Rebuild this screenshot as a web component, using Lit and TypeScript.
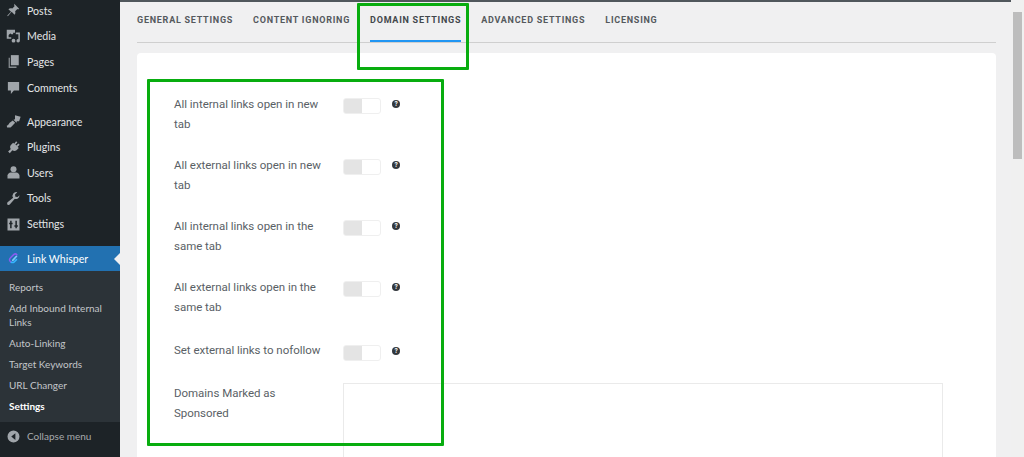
import { LitElement, html, css, svg } from "lit";
import { customElement } from "lit/decorators.js";

const icons: Record<string, unknown> = {
  pin: svg`<path d="M11 1l6.500 6.500-1.300 1-1-.4-3 3c.6 2 .3 3.600-.8 4.700L7.500 11.800 2.500 17.500l-.8-.8 5-5-3.500-3.500C4.300 6.900 6.400 6.600 8.400 7.200l3-3-.4-1z"/>`,
  media: svg`<path d="M1 1h11v4H9.500V7H7L6 5.500 3.500 8v3H7v2H1z"/><circle cx="6" cy="4.500" r="1.300"/><path d="M13 4.500h5.500v11.200a2.300 2.300 0 1 1-2-2.200V7H13z"/><circle cx="10" cy="15.500" r="2.500"/>`,
  pages: svg`<path d="M6.500 1.500H17V15H6.500z"/><path d="M3.500 5H5.200v11.500H14V18.500H3.500z" opacity=".8"/>`,
  comments: svg`<path d="M2.500 2.500h15v11.500h-7L6.500 18.500V14h-4z"/>`,
  brush: svg`<path d="M12 1.500l7.500 2-2 6L14.500 9.500l-.5 2-4-4 2-.5z"/><path d="M9 8.500l3.200 3.200-3.700 3.800L6 18H1.500L1 15.500c2-.5 3-2 3.500-3.500z"/>`,
  plug: svg`<path d="M13.500 1.500l1.700 1.700L12.500 6 13.800 7.300 16.500 4.500l1.700 1.700L15.500 9l1.500 1.500-3 3c-1.800 1.400-3.800 1.300-5.500 0L5 17.500 2.800 15.300l3.700-3.300c-1.300-1.700-1.400-3.700 0-5.500l3-3L11 5z"/>`,
  user: svg`<circle cx="10" cy="5.500" r="4"/><path d="M2 18v-4c0-2 2.500-4 4-4h8c1.500 0 4 2 4 4v4z"/>`,
  wrench: svg`<path d="M18 6a5 5 0 0 1-6.500 4.500L5 18c-1.200 1.200-3.500.6-3.500-1.500 0-.5.200-1 .6-1.500L9.500 9A5 5 0 0 1 15 1.500L12 4.500l.5 3 3 .5 2.500-2.500z"/>`,
  sliders: svg`<path fill-rule="evenodd" d="M2 2h16v16H2zM5.500 5v2.500H4.200v2h1.300V15h2V9.500h1.300v-2H7.500V5zM12.500 5v6h-1.300v2h1.300v2h2v-2h1.300v-2h-1.300V5z"/>`,
};

const menu1 = [
  ["pin", "Posts"],
  ["media", "Media"],
  ["pages", "Pages"],
  ["comments", "Comments"],
];
const menu2 = [
  ["brush", "Appearance"],
  ["plug", "Plugins"],
  ["user", "Users"],
  ["wrench", "Tools"],
  ["sliders", "Settings"],
];
const subs = ["Reports", "Add Inbound Internal Links", "Auto-Linking", "Target Keywords", "URL Changer"];
const tabs = ["GENERAL SETTINGS", "CONTENT IGNORING", "DOMAIN SETTINGS", "ADVANCED SETTINGS", "LICENSING"];
const rows = [
  "All internal links open in new tab",
  "All external links open in new tab",
  "All internal links open in the same tab",
  "All external links open in the same tab",
  "Set external links to nofollow",
];

@customElement("app-root")
export class AppRoot extends LitElement {
  static styles = css`
    :host {
      display: block;
      width: 1024px;
      height: 457px;
      position: relative;
      overflow: hidden;
      background: #f0f0f1;
      font-family: "Lato", "Liberation Sans", sans-serif;
    }
    .layout {
      display: grid;
      grid-template-columns: 120px 1fr 13px;
      height: 457px;
    }
    .side {
      background: #1d2327;
      color: #e4e6e8;
      font-size: 10.600px;
      overflow: hidden;
      display: flex;
      flex-direction: column;
      margin-top: -2px;
      height: 459px;
    }
    .item {
      height: 25.600px;
      flex: none;
      display: flex;
      align-items: center;
      padding-left: 6px;
      gap: 6px;
    }
    .item svg {
      width: 15px;
      height: 15px;
      fill: #a0a5aa;
      flex: none;
    }
    .sep {
      height: 8.500px;
      flex: none;
    }
    .current {
      margin-top: 9.500px;
      background: #2271b1;
      color: #fff;
      position: relative;
      height: 25px;
    }
    .current::after {
      content: "";
      position: absolute;
      right: 0;
      top: 7px;
      border: 6px solid transparent;
      border-right-color: #f0f0f1;
      border-left: 0;
    }
    .sub {
      background: #2c3338;
      padding: 5.500px 0;
      color: #c3c6c9;
      font-size: 10px;
      flex: none;
    }
    .sub div {
      padding: 3.500px 8px 3.500px 9px;
      line-height: 14px;
    }
    .sub .on {
      color: #fff;
      font-weight: 700;
    }
    .collapse {
      color: #a7aaad;
      font-size: 10px;
      height: 28px;
    }
    .main {
      border-top: 2px solid #50575c;
      padding: 0 15px 0 17px;
      min-width: 0;
      overflow: hidden;
    }
    .tabs {
      display: flex;
      border-bottom: 1px solid #cfcfcf;
      height: 40px;
      gap: 20px;
      font-family: "Roboto", "Liberation Sans", sans-serif;
      font-weight: 700;
      font-size: 9px;
      letter-spacing: 0.750px;
      color: #55595d;
    }
    .tab {
      position: relative;
      padding-top: 12px;
      line-height: 12px;
      white-space: nowrap;
    }
    .tab.active {
      color: #42474c;
    }
    .tab.active::after {
      content: "";
      position: absolute;
      left: 0;
      right: 0;
      top: 38px;
      height: 2px;
      background: #2196f3;
    }
    .card {
      margin-top: 10px;
      background: #fff;
      border-radius: 4px;
      height: 420px;
      padding: 42px 0 0 37px;
      display: grid;
      grid-template-columns: 169px 600px;
      grid-auto-rows: min-content;
      color: #5a5f66;
      font-family: "Roboto", "Liberation Sans", sans-serif;
      font-size: 11.500px;
      letter-spacing: -0.030px;
      line-height: 19.500px;
    }
    .label {
      width: 153px;
      padding-bottom: 22px;
    }
    .label.last {
      padding-bottom: 24px;
    }
    .label.single {
      padding-bottom: 23.500px;
    }
    .ctl {
      display: flex;
      gap: 11px;
      align-items: flex-start;
      padding-top: 3px;
    }
    .ctl.single {
      padding-top: 4px;
    }
    .toggle {
      width: 36px;
      height: 14px;
      border: 1px solid #efefef;
      border-radius: 3px;
      background: linear-gradient(to right, #e4e4e4 50%, #fff 50%);
      display: block;
    }
    .help {
      width: 8px;
      height: 8px;
      border-radius: 50%;
      background: #33383d;
      color: #fff;
      font-size: 6.500px;
      font-weight: 700;
      line-height: 8px;
      text-align: center;
      letter-spacing: 0;
      margin-top: 2px;
    }
    .area {
      border: 1px solid #eaeaea;
      height: 120px;
      margin-top: -1px;
    }
    .scroll {
      background: #f0f0f0;
      padding: 12px 2px 0 2px;
    }
    .thumb {
      height: 147px;
      background: #bdbdbd;
    }
    .mark {
      position: absolute;
      border: 3px solid #08ad0f;
      border-radius: 1px;
      box-sizing: border-box;
      pointer-events: none;
    }
    .mark.tabmark {
      left: 357px;
      top: 3px;
      width: 112px;
      height: 67px;
    }
    .mark.rowmark {
      left: 147px;
      top: 79px;
      width: 297px;
      height: 367px;
    }
  `;

  private icon(name: string) {
    return html`<svg viewBox="0 0 20 20">${icons[name]}</svg>`;
  }

  render() {
    return html`
      <div class="layout">
        <nav class="side">
          ${menu1.map(([i, t]) => html`<div class="item">${this.icon(i)}<span>${t}</span></div>`)}
          <div class="sep"></div>
          ${menu2.map(([i, t]) => html`<div class="item">${this.icon(i)}<span>${t}</span></div>`)}
          <div class="item current">
            <svg viewBox="0 0 20 20" style="fill:none">
              <path d="M14 7l-5 5.500" stroke="#7ec8ff" stroke-width="2.200" stroke-linecap="round"/>
              <path d="M14.500 5a3 3 0 0 0-4-.5L6 9a3.500 3.500 0 0 0 1 6" stroke="#8a5cf0" stroke-width="2" stroke-linecap="round"/>
              <path d="M7 15a3.500 3.500 0 0 0 4-.5l3-3" stroke="#35b5ff" stroke-width="2" stroke-linecap="round"/>
            </svg>
            <span>Link Whisper</span>
          </div>
          <div class="sub">
            ${subs.map((s) => html`<div>${s}</div>`)}
            <div class="on">Settings</div>
          </div>
          <div class="item collapse">
            <svg viewBox="0 0 20 20"><path fill-rule="evenodd" d="M10 2a8 8 0 1 1 0 16 8 8 0 0 1 0-16zM12.500 5.500L7 10l5.500 4.500z"/></svg>
            <span>Collapse menu</span>
          </div>
        </nav>
        <main class="main">
          <div class="tabs">
            ${tabs.map((t, i) => html`<div class="tab ${i === 2 ? "active" : ""}">${t}</div>`)}
          </div>
          <section class="card">
            ${rows.map(
              (r, i) => html`
                <div class="label ${i === 4 ? "single" : i === 3 ? "last" : ""}">${r}</div>
                <div class="ctl ${i === 4 ? "single" : ""}"><span class="toggle"></span><span class="help">?</span></div>
              `,
            )}
            <div class="label">Domains Marked as Sponsored</div>
            <div class="area"></div>
          </section>
        </main>
        <div class="scroll"><div class="thumb"></div></div>
      </div>
      <div class="mark tabmark"></div>
      <div class="mark rowmark"></div>
    `;
  }
}
